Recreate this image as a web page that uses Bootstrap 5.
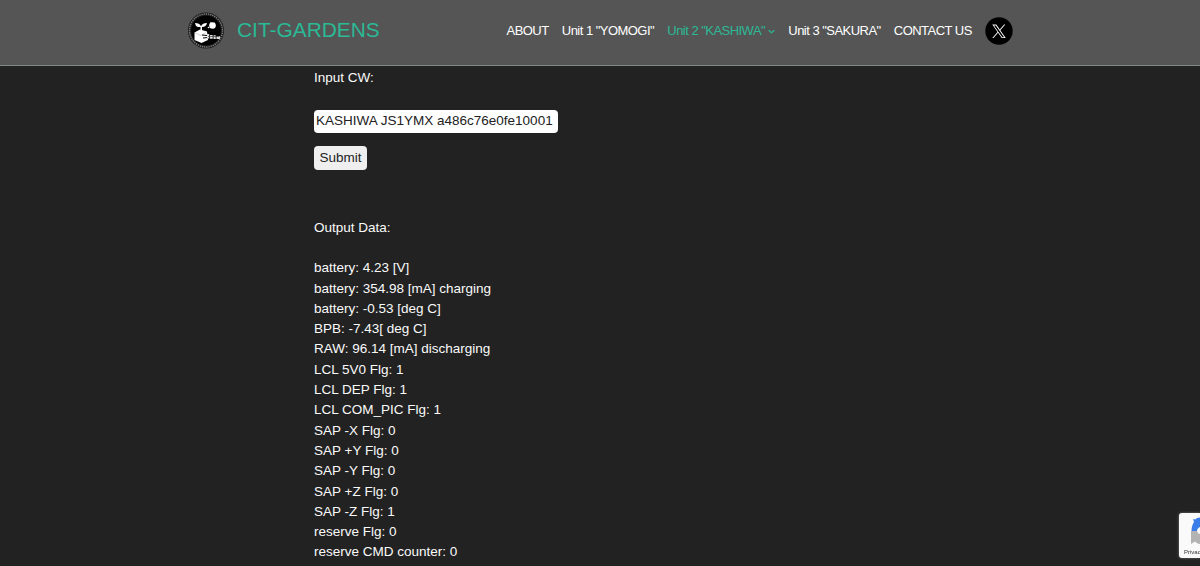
<!DOCTYPE html>
<html lang="en">
<head>
<meta charset="utf-8">
<meta name="viewport" content="width=device-width, initial-scale=1">
<title>CIT-GARDENS</title>
<link href="https://cdn.jsdelivr.net/npm/bootstrap@5.3.0/dist/css/bootstrap.min.css" rel="stylesheet">
<style>
  body { background: #222; color: #fafafa; font-family: "Liberation Sans", Arial, sans-serif; font-size: 13.5px; line-height: 20.29px; height: 566px; overflow: hidden; }
  .site-header { background: #555; height: 66px; border-bottom: 1px solid #7f8c86; padding: 0 187px 4px; }
  .site-name { color: #2bb996; font-size: 20.9px; line-height: 24px; margin: 0 0 2px 12px; }
  .site-nav { gap: 13.2px; }
  .site-nav .nav-link { color: #fff; font-size: 13px; line-height: 20px; letter-spacing: -.53px; white-space: nowrap; padding-top: 1px !important; }
  .site-nav .nav-link.active { color: #2bb996; }
  .main-col { margin-left: 314px; padding-top: 2.3px; }
  .cw-input { display: block; width: 244px; height: 23px; border: 0; border-radius: 4px; background: #fff; color: #222; font-size: 13.5px; padding: 0 2px 2px; margin-top: 21.7px; }
  .cw-submit { display: block; width: 53px; height: 24px; border: 0; border-radius: 4px; background: #efefef; color: #222; font-size: 13.5px; line-height: 24px; padding: 0; margin: 13px 0 47.4px; }
  .privacy-badge { right: 0; top: 513px; width: 21px; height: 45px; background: #fafafa; border-radius: 3px 0 0 3px; box-shadow: 0 0 3px #777; }
  .privacy-badge span { position: absolute; left: 5px; top: 35px; font-size: 6px; line-height: 8px; color: #333; }
</style>
</head>
<body>
<header class="site-header navbar flex-nowrap justify-content-between align-items-center">
  <a class="d-flex align-items-center text-decoration-none" href="#">
    <svg width="38" height="38" viewBox="0 0 38 38" aria-hidden="true">
      <circle cx="19" cy="18.500" r="18" fill="#1c1c1c"/>
      <circle cx="19" cy="18.500" r="16.500" fill="none" stroke="#808080" stroke-width="1.400" stroke-dasharray="1.300 .9"/>
      <circle cx="19" cy="18.500" r="14.800" fill="#000"/>
      <path d="M13.500 19v-4C9.500 15.500 8.500 13.500 8 11c3 .2 5 1 6 3.200C15 12 17 11 20 11c-.5 2.800-2 4-5 4v4z" fill="#fff"/>
      <path d="M7.500 20.500l5.500-3 7 2 1 8.500-6.500 3-7-3z" fill="#fff"/>
      <path d="M8 21l6 2.500 5-3" fill="none" stroke="#bbb" stroke-width=".6"/>
      <circle cx="25.500" cy="13.500" r="3.300" fill="#fff"/>
      <circle cx="21.500" cy="15.500" r=".8" fill="#fff"/>
      <path d="M23.500 10.500l2 1.500 2-1" stroke="#fff" fill="none"/>
      <path d="M15 23l5 .5M16 26l5-.5" stroke="#000" stroke-width="1"/>
      <path d="M20 22h2.200v4.500H20zM23 23h2.700v3.800H23zM26.500 23.300h2.200V27h-2.200zM29.500 24.200H33V27h-3.500z" fill="#ddd"/>
      <path d="M21 24.500h11" stroke="#444" stroke-width=".7"/>
    </svg>
    <span class="site-name">CIT-GARDENS</span>
  </a>
  <nav class="site-nav d-flex align-items-center">
    <a class="nav-link p-0" href="#">ABOUT</a>
    <a class="nav-link p-0" href="#">Unit 1 "YOMOGI"</a>
    <a class="nav-link p-0 active" href="#">Unit 2 "KASHIWA"<svg width="7" height="5" viewBox="0 0 7 5" style="margin-left:3px" aria-hidden="true"><path d="M.6 1.200l2.900 2.500 2.900-2.500" fill="none" stroke="currentColor" stroke-width="1.200"/></svg></a>
    <a class="nav-link p-0" href="#">Unit 3 "SAKURA"</a>
    <a class="nav-link p-0" href="#">CONTACT US</a>
    <a class="d-flex" href="#" aria-label="X">
      <svg width="28" height="28" viewBox="0 0 28 28"><circle cx="14" cy="14" r="13.700" fill="#000"/><g transform="translate(7.300 7.600) scale(.56)"><path fill="#fff" d="M14.258 10.152 23.176 0h-2.113l-7.747 8.813L7.133 0H0l9.352 13.328L0 23.973h2.113l8.176-9.309 6.531 9.309h7.133zm-2.895 3.293-.949-1.328L2.875 1.560h3.246l6.086 8.523.945 1.328 7.910 11.078h-3.246z"/></g></svg>
    </a>
  </nav>
</header>
<main class="main-col">
  <div>Input CW:</div>
  <input class="cw-input" type="text" value="KASHIWA JS1YMX a486c76e0fe10001" aria-label="Input CW">
  <button class="cw-submit btn" type="button">Submit</button>
  <div>Output Data:</div>
  <div class="out-lines"><br>battery: 4.23 [V]<br>battery: 354.98 [mA] charging<br>battery: -0.53 [deg C]<br>BPB: -7.43[ deg C]<br>RAW: 96.14 [mA] discharging<br>LCL 5V0 Flg: 1<br>LCL DEP Flg: 1<br>LCL COM_PIC Flg: 1<br>SAP -X Flg: 0<br>SAP +Y Flg: 0<br>SAP -Y Flg: 0<br>SAP +Z Flg: 0<br>SAP -Z Flg: 1<br>reserve Flg: 0<br>reserve CMD counter: 0</div>
</main>
<aside class="privacy-badge position-fixed overflow-hidden">
  <svg class="d-block" width="21" height="35" viewBox="0 0 21 35" aria-hidden="true">
    <path d="M21 4.500c-2 .2-3.500.8-5 2l-2-.5 1 3c-1.700 2.500-2.500 5.500-2.500 9H18c0-2 1-3 3-4z" fill="#3b7de8"/>
    <path d="M12 18h6c.3 1.500 1.500 3 3 3v10c-2 0-3.500-1-5-2.500L12 31z" fill="#b3b3b3"/>
  </svg>
  <span>Privacy</span>
</aside>
<script src="https://cdn.jsdelivr.net/npm/bootstrap@5.3.0/dist/js/bootstrap.bundle.min.js"></script>
</body>
</html>
